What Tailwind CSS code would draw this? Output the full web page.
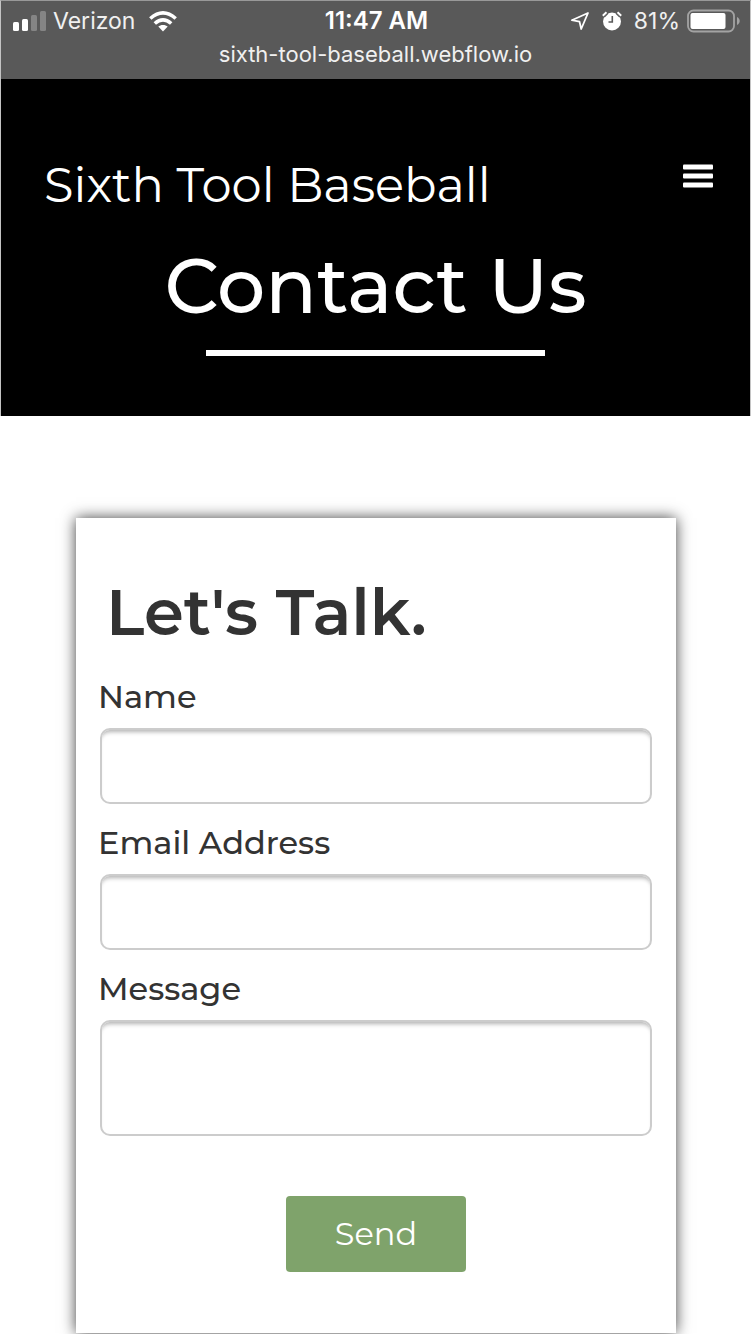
<!DOCTYPE html>
<html lang="en">
<head>
<meta charset="utf-8">
<meta name="viewport" content="width=device-width, initial-scale=1">
<title>Contact Us | Sixth Tool Baseball</title>
<script src="https://cdn.jsdelivr.net/npm/@tailwindcss/browser@4"></script>
</head>
<body class="min-h-screen overflow-x-hidden bg-white font-[Montserrat,Inter,sans-serif] text-[#333]">
  <div class="border-x border-t border-x-[#c4c4c4] border-t-[#999] bg-[#595959] pt-1 pb-2 font-[Inter,sans-serif] text-[#f0f0f0]">
    <div class="grid h-8 grid-cols-[1fr_auto_1fr] items-center pr-2.5 pl-3">
      <div class="flex items-center">
        <svg class="h-5 w-[34px]" viewBox="0 0 34 20" fill="#fff" aria-label="Signal strength">
          <rect y="11" width="6" height="9" rx="1.5"/>
          <rect x="9" y="8" width="6" height="12" rx="1.5"/>
          <rect x="18" y="4" width="6" height="16" rx="1.5" fill="#858585"/>
          <rect x="27" width="6" height="20" rx="1.5" fill="#858585"/>
        </svg>
        <span class="ml-1.5 text-[23px] leading-8">Verizon</span>
        <svg class="ml-3.5 h-[21px] w-7" viewBox="0 0 28 21" fill="none" stroke="#fff" stroke-width="3.6" aria-label="Wi-Fi">
          <path d="M1.3 7.5Q14-3.700 26.700 7.500"/>
          <path d="M5.800 12.500Q14 5.200 22.200 12.500"/>
          <path d="M14 14c-1.900 0-3.500.5-4.700 1.600L14 20.500l4.700-4.900c-1.200-1.100-2.800-1.600-4.700-1.600z" fill="#fff" stroke="none"/>
        </svg>
      </div>
      <span class="text-[24px] leading-8 font-semibold text-white">11:47 AM</span>
      <div class="flex items-center justify-end">
        <svg class="size-5" viewBox="0 0 20 20" fill="none" stroke="#fff" stroke-width="1.8" stroke-linejoin="round" aria-label="Location">
          <path d="M18 2 1.800 9.200 9.500 10.600 11.200 18z"/>
        </svg>
        <svg class="ml-3 size-5" viewBox="0 0 20 20" aria-label="Alarm">
          <circle cx="10" cy="10.500" r="9" fill="#fff"/>
          <path d="M.8 4.800 4.500 1.200M15.500 1.200l3.700 3.600" stroke="#fff" stroke-width="2"/>
          <path d="M2.300 6 6 2.400M14 2.400 17.700 6" stroke="#595959" stroke-width="1.200"/>
          <path d="M10.300 5v6H6.500" fill="none" stroke="#595959" stroke-width="1.600"/>
        </svg>
        <span class="ml-3 text-[23px] leading-8">81%</span>
        <svg class="ml-1.5 h-6 w-[54px]" viewBox="0 0 54 24" aria-label="Battery 81 percent">
          <rect x="2" y="1.500" width="46" height="21" rx="5.500" fill="none" stroke="#a3a3a3" stroke-width="1.800"/>
          <rect x="4.500" y="4" width="35" height="16" rx="2" fill="#fff"/>
          <path d="M51 8c3.600 1.500 3.600 6.500 0 8z" fill="#a3a3a3"/>
        </svg>
      </div>
    </div>
    <p class="text-center text-[22px] leading-[34px]">sixth-tool-baseball.webflow.io</p>
  </div>

  <header class="border-x border-[#c4c4c4] bg-black px-9 pt-[75px] pb-[60px] text-white">
    <div class="flex items-start justify-between">
      <a href="#" class="pl-[7px] text-[48px] leading-[62px] font-normal">Sixth Tool Baseball</a>
      <button type="button" aria-label="Open menu" class="pt-[10px]">
        <svg class="h-6 w-8" viewBox="0 0 32 24" fill="#fff">
          <rect x="1" y="0.500" width="30" height="5" rx="1"/>
          <rect x="1" y="9.500" width="30" height="5" rx="1"/>
          <rect x="1" y="18.500" width="30" height="5" rx="1"/>
        </svg>
      </button>
    </div>
    <h1 class="mt-6 text-center text-[76px] leading-[92px] font-medium">Contact Us</h1>
    <div class="mx-auto mt-[18px] h-1.5 w-1/2 bg-white"></div>
  </header>

  <main class="overflow-hidden pt-[102px] pb-px pl-px">
    <form class="mx-[10%] bg-white px-[22px] pt-[52px] pb-[61px] shadow-[0_0_14px_rgba(0,0,0,0.75)]">
      <h2 class="pl-2 text-[64px] leading-[84px] font-semibold">Let's Talk.</h2>
      <label for="name" class="mt-[21px] block text-[32px] leading-[44px] font-medium">Name</label>
      <div class="mt-[9px] px-0.5">
        <input id="name" name="name" type="text" class="block h-[76px] w-full rounded-[10px] border-2 border-[#ccc] px-4 text-[32px] shadow-[inset_0_5px_4px_-3px_rgba(0,0,0,0.3)]">
      </div>
      <label for="email" class="mt-[17px] block text-[32px] leading-[44px] font-medium">Email Address</label>
      <div class="mt-[9px] px-0.5">
        <input id="email" name="email" type="email" class="block h-[76px] w-full rounded-[10px] border-2 border-[#ccc] px-4 text-[32px] shadow-[inset_0_5px_4px_-3px_rgba(0,0,0,0.3)]">
      </div>
      <label for="message" class="mt-[17px] block text-[32px] leading-[44px] font-medium">Message</label>
      <div class="mt-[9px] px-0.5">
        <textarea id="message" name="message" class="block h-[116px] w-full resize-none rounded-[10px] border-2 border-[#ccc] px-4 text-[32px] shadow-[inset_0_5px_4px_-3px_rgba(0,0,0,0.3)]"></textarea>
      </div>
      <button type="submit" class="mx-auto mt-[60px] block h-[76px] w-[180px] rounded-[4px] bg-[#7fa36b] text-[32px] font-normal text-white">Send</button>
    </form>
  </main>
</body>
</html>
